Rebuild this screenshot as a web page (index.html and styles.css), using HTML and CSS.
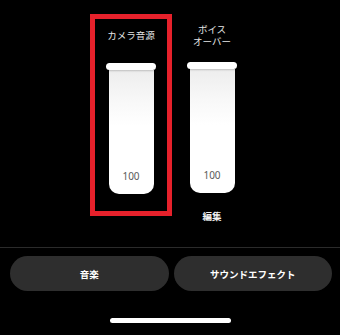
FILE: index.html
```html
<!DOCTYPE html>
<html lang="ja">
<head>
<meta charset="utf-8">
<link rel="stylesheet" href="styles.css">
</head>
<body>
<div class="screen">
  <div class="mixer">
    <div class="channel selected">
      <div class="label">カメラ音源</div>
      <div class="slider">
        <div class="cap"></div>
        <div class="fill"><span class="value">100</span></div>
      </div>
    </div>
    <div class="channel second">
      <div class="label">ボイス<br>オーバー</div>
      <div class="slider">
        <div class="cap"></div>
        <div class="fill"><span class="value">100</span></div>
      </div>
      <div class="edit">編集</div>
    </div>
  </div>
  <div class="divider"></div>
  <div class="actions">
    <button class="pill">音楽</button>
    <button class="pill">サウンドエフェクト</button>
  </div>
  <div class="home"></div>
</div>
</body>
</html>
```
FILE: styles.css
```css
* { box-sizing: border-box; }
html, body {
  margin: 0;
  padding: 0;
  background: #000;
}
body {
  font-family: "Noto Sans CJK JP", "Noto Sans", sans-serif;
  color: #fff;
}
.screen {
  width: 340px;
  height: 335px;
  overflow: hidden;
  display: flex;
  flex-direction: column;
}
.mixer {
  height: 247px;
  display: flex;
  padding: 14px 0 0 90px;
}
.channel {
  width: 82px;
  height: 202px;
  border: 5px solid transparent;
  display: flex;
  flex-direction: column;
  align-items: center;
}
.channel.selected {
  border-color: #e6212b;
}
.channel.second {
  margin-left: -1px;
}
.label {
  margin-top: 5px;
  height: 24px;
  display: flex;
  align-items: center;
  text-align: center;
  font-size: 9.5px;
  line-height: 11.5px;
  color: #e6e6e6;
}
.slider {
  margin-top: 15px;
  display: flex;
  flex-direction: column;
  align-items: center;
}
.cap {
  width: 50px;
  height: 7px;
  background: #fff;
  border-radius: 4px;
  box-shadow: 0 1px 2px rgba(0,0,0,0.2);
  position: relative;
  z-index: 1;
}
.fill {
  width: 45px;
  height: 124px;
  background: linear-gradient(#ededed 0%, #f8f8f8 25%, #ffffff 45%);
  border-radius: 0 0 10px 10px;
  display: flex;
  flex-direction: column;
  justify-content: flex-end;
  align-items: center;
  padding-bottom: 12px;
}
.value {
  font-family: "Noto Sans", "Liberation Sans", sans-serif;
  font-size: 10px;
  line-height: 12px;
  color: #5a5a5a;
}
.edit {
  margin-top: 17px;
  font-size: 9.5px;
  line-height: 12px;
  font-weight: bold;
  color: #f2f2f2;
}
.divider {
  height: 1px;
  background: #2b2b2b;
}
.actions {
  display: flex;
  gap: 5px;
  padding: 8px 8px 0 10px;
}
.pill {
  flex: 1;
  height: 35px;
  border: 0;
  border-radius: 18px;
  background: #2e2e2e;
  color: #fff;
  font-family: inherit;
  font-size: 9.5px;
  font-weight: bold;
  padding: 0;
}
.home {
  margin: 27px auto 0;
  width: 121px;
  height: 5px;
  border-radius: 3px;
  background: #fff;
}
```
